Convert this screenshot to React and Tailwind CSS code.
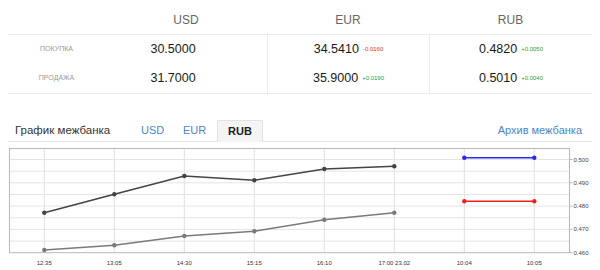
import React from 'react';

const rates = [
  { code: 'USD', buy: '30.5000', buyDiff: null, sell: '31.7000', sellDiff: null },
  { code: 'EUR', buy: '34.5410', buyDiff: '-0.0160', sell: '35.9000', sellDiff: '+0.0190' },
  { code: 'RUB', buy: '0.4820', buyDiff: '+0.0050', sell: '0.5010', sellDiff: '+0.0040' },
];

const xs = [44.3, 114.3, 184.3, 254.3, 324.3, 394.3, 464.3, 534.3];
const xLabels = ['12:35', '13:05', '14:30', '15:15', '16:10', '17:00 23.02', '10:04', '10:05'];
const darkY = [70.7, 52.3, 34, 38.3, 27, 24.3];
const grayY = [108, 103.3, 94, 89.3, 77.7, 70.7];
const gridY = [17.5, 29.2, 40.8, 52.5, 64.1, 75.8, 87.4, 99.1];
const yLabels = [
  { v: '0.500', y: 17.5 },
  { v: '0.490', y: 40.8 },
  { v: '0.480', y: 64.1 },
  { v: '0.470', y: 87.4 },
  { v: '0.460', y: 110.7 },
];

const Diff = ({ value }) => {
  if (!value) return <span className="invisible text-[6px] ml-[4px]">+0.0000</span>;
  const color = value.startsWith('-') ? 'text-[#e0303a]' : 'text-[#2e9e3a]';
  return <span className={`text-[6px] ml-[4px] ${color}`}>{value}</span>;
};

const Line = ({ ys, color }) => {
  const pts = ys.map((y, i) => `${xs[i]},${y}`).join(' ');
  return (
    <g>
      <polyline points={pts} fill="none" stroke={color} strokeWidth="1.6" />
      {ys.map((y, i) => (
        <circle key={i} cx={xs[i]} cy={y} r="2.2" fill={color} />
      ))}
    </g>
  );
};

const Chart = () => (
  <svg width="600" height="129" className="block">
    {/* grid */}
    {gridY.map((y) => (
      <line key={y} x1="9.5" x2="569.5" y1={y} y2={y} stroke="#e4e4e4" strokeWidth="1" />
    ))}
    {xs.map((x) => (
      <line key={x} x1={x} x2={x} y1="6.5" y2="110.7" stroke="#e0e0e0" strokeWidth="1" />
    ))}
    <rect x="9.5" y="6.5" width="560" height="104.2" fill="none" stroke="#b8b8b8" strokeWidth="1" />
    {yLabels.map((l) => (
      <g key={l.v}>
        <line x1="569.5" x2="572.5" y1={l.y} y2={l.y} stroke="#b8b8b8" />
        <text x="573.5" y={l.y + 2} fontSize="6" fill="#444" fontFamily="Liberation Sans, Arial, sans-serif">
          {l.v}
        </text>
      </g>
    ))}
    {xLabels.map((t, i) => (
      <text
        key={t}
        x={xs[i]}
        y="122.7"
        fontSize="6"
        fill="#333"
        textAnchor="middle"
        fontFamily="Liberation Sans, Arial, sans-serif"
      >
        {t}
      </text>
    ))}
    <Line ys={grayY} color="#7a7a7a" />
    <Line ys={darkY} color="#444" />
    {/* today */}
    <line x1={xs[6]} x2={xs[7]} y1="15.7" y2="15.7" stroke="#2a2ae6" strokeWidth="1.6" />
    <circle cx={xs[6]} cy="15.7" r="2.2" fill="#2a2ae6" />
    <circle cx={xs[7]} cy="15.7" r="2.2" fill="#2a2ae6" />
    <line x1={xs[6]} x2={xs[7]} y1="59.3" y2="59.3" stroke="#f02020" strokeWidth="1.6" />
    <circle cx={xs[6]} cy="59.3" r="2.2" fill="#f02020" />
    <circle cx={xs[7]} cy="59.3" r="2.2" fill="#f02020" />
  </svg>
);

export default function App() {
  return (
    <div className="w-[600px] h-[270px] bg-white overflow-hidden font-['Liberation_Sans',Arial,sans-serif]">
      <div className="mx-[8px]">
        {/* Rates table */}
        <div className="grid grid-cols-[97px_162px_162px_163px] h-[35px] pt-[5px] items-center border-b border-[#ececec] text-[12px] text-[#666]">
          <div />
          {rates.map((r) => (
            <div key={r.code} className="text-center">{r.code}</div>
          ))}
        </div>
        <div className="grid grid-cols-[97px_162px_162px_163px] border-b border-[#ececec]">
          {[
            ['ПОКУПКА', 'buy', 'buyDiff'],
            ['ПРОДАЖА', 'sell', 'sellDiff'],
          ].map(([label, key, diffKey]) => (
            <React.Fragment key={label}>
              <div className="h-[29px] flex items-center justify-center text-[7px] text-[#999]">{label}</div>
              {rates.map((r, i) => (
                <div
                  key={r.code}
                  className={`h-[29px] flex items-center justify-center text-[12.5px] text-[#1a1a1a] ${i > 0 ? 'border-l border-[#ececec]' : ''}`}
                >
                  <span>{r[key]}</span>
                  <Diff value={r[diffKey]} />
                </div>
              ))}
            </React.Fragment>
          ))}
        </div>

        {/* Tabs */}
        <div className="mt-[26px] h-[22px] flex items-end border-b border-[#e5e5e5] text-[11px]">
          <div className="h-full flex items-center pl-[7px] text-[#333] text-[11.5px] w-[133px]">График межбанка</div>
          <div className="h-full flex items-center text-[#4a86c8] w-[42px]">USD</div>
          <div className="h-full flex items-center text-[#4a86c8] w-[34px]">EUR</div>
          <div className="h-[22px] mb-[-1px] flex items-center px-[10px] bg-[#f4f4f4] border border-b-0 border-[#e2e2e2] font-bold text-[#222]">
            RUB
          </div>
          <div className="ml-auto h-full flex items-center pr-[10px] text-[#4a86c8]">Архив межбанка</div>
        </div>
      </div>
      <Chart />
    </div>
  );
}
